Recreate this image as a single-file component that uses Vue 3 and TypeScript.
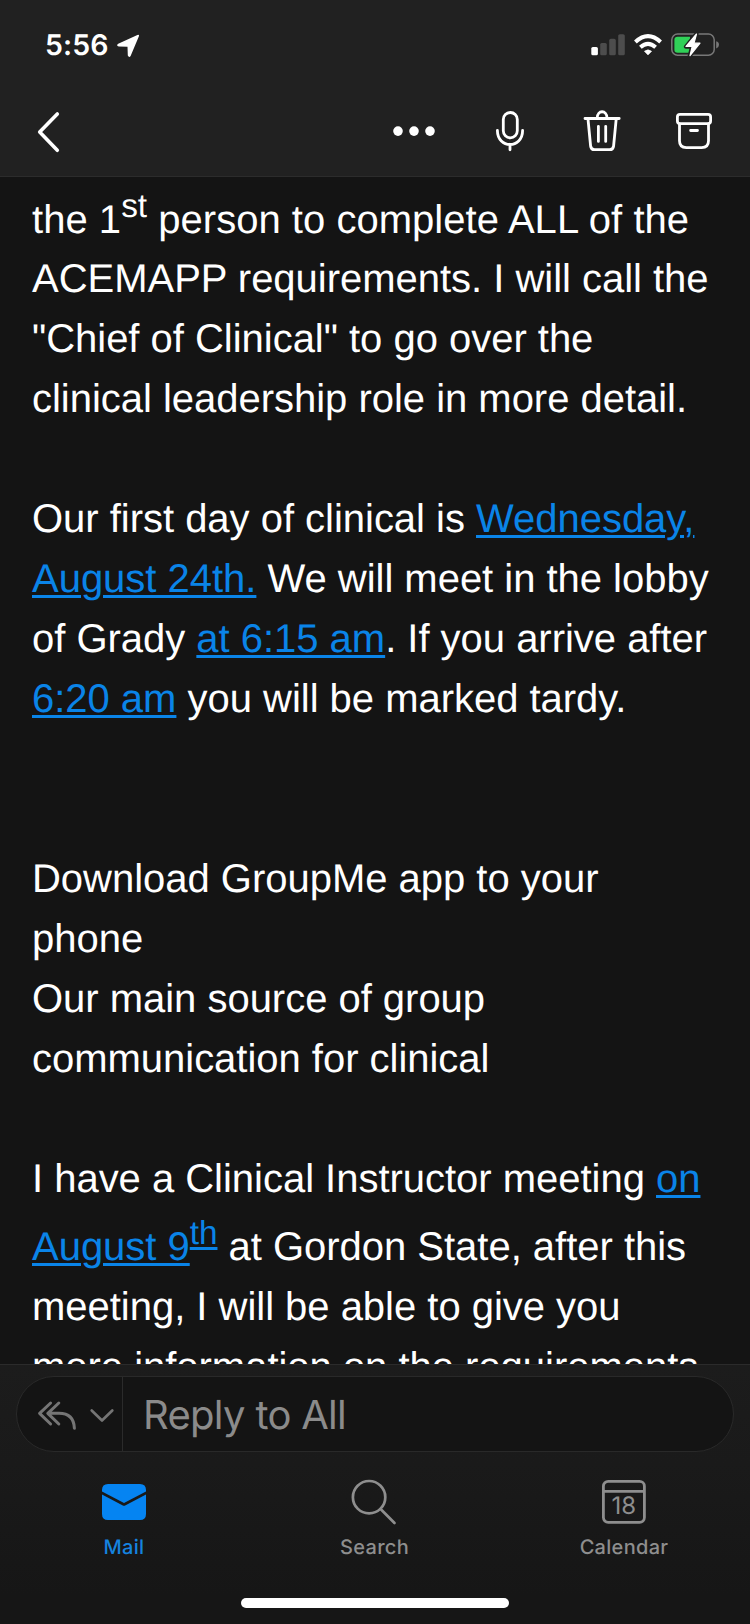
<script setup lang="ts">
interface Tab {
  id: string
  label: string
  active: boolean
}

const tabs: Tab[] = [
  { id: 'mail', label: 'Mail', active: true },
  { id: 'search', label: 'Search', active: false },
  { id: 'calendar', label: 'Calendar', active: false },
]
</script>

<template>
  <div class="screen">
    <header class="top">
      <div class="status">
        <span class="time">5:56</span>
        <svg class="location" width="24" height="24" viewBox="116 33 24 24">
          <path d="M118.2 43.8 L137.4 34.9 Q139.6 34.2 138.8 36.4 L130.6 55.9 Q129.2 58 127.8 55.6 L127.5 46.8 L118.8 46.5 Q115.8 45.7 118.2 43.8Z" fill="#fff" />
        </svg>
        <svg class="signals" width="130" height="28" viewBox="590 31 130 28">
          <rect x="591.3" y="47" width="6.6" height="8.3" rx="1.6" fill="#fff" />
          <g fill="#4d4d4d">
            <rect x="600.2" y="43" width="6.6" height="12.3" rx="1.6" />
            <rect x="609.2" y="38.8" width="6.6" height="16.5" rx="1.6" />
            <rect x="618.2" y="34.2" width="6.6" height="21.1" rx="1.6" />
          </g>
          <path d="M648 54.9 L644.4 51.3 Q648 48.3 651.6 51.3Z" fill="#fff" stroke="#fff" stroke-width=".6" />
          <path d="M640.4 47.2 Q648 40.5 655.6 47.2" fill="none" stroke="#fff" stroke-width="4" />
          <path d="M635.4 42 Q648 30.4 660.6 42" fill="none" stroke="#fff" stroke-width="4" />
          <rect x="671.8" y="34" width="42.4" height="21.2" rx="5.8" fill="none" stroke="#787878" stroke-width="1.5" />
          <path d="M716.2 41.2 Q719 42 719 44.8 Q719 47.6 716.2 48.5Z" fill="#787878" />
          <path d="M677.5 36.8 H690 V52.8 H677.5 Q674.4 52.8 674.4 49.8 V39.8 Q674.4 36.8 677.5 36.8Z" fill="#30d158" />
          <path d="M696.7 33.6 L685.8 46.7 H692 L689.6 56 L700.2 42.9 H694.2Z" fill="#fff" stroke="#212121" stroke-width="4" stroke-linejoin="round" />
          <path d="M696.5 34 L686 46.5 H692.2 L690 55.6 L700 43.2 H694Z" fill="#fff" stroke="#fff" stroke-width="1.2" stroke-linejoin="round" />
        </svg>
      </div>
      <div class="toolbar">
        <svg width="30" height="48" viewBox="34 108 30 48" class="back">
          <path d="M57.3 114 L39.7 132.1 L57.3 150.3" stroke-width="3.6" />
        </svg>
        <svg width="44" height="48" viewBox="392 108 44 48">
          <g fill="#fff" stroke="none">
            <circle cx="398" cy="131.1" r="4.8" />
            <circle cx="414" cy="131.1" r="4.8" />
            <circle cx="430" cy="131.1" r="4.8" />
          </g>
        </svg>
        <svg width="36" height="48" viewBox="492 108 36 48">
          <rect x="503.3" y="112.5" width="14" height="25.3" rx="7" />
          <path d="M497.4 130.5 C497.4 149 522.6 149 522.6 130.5 M510 144.5 V149.8" />
        </svg>
        <svg width="40" height="48" viewBox="582 108 40 48">
          <path d="M585 118.5 H619.2 M597.2 118 C597.2 109.7 607 109.7 607 118 M588 119 L590.6 146 Q591 149.7 594.6 149.7 H609.6 Q613.2 149.7 613.6 146 L616.2 119 M598.4 126.3 V141.4 M605.7 126.3 V141.4" />
        </svg>
        <svg width="40" height="48" viewBox="674 108 40 48">
          <rect x="677.4" y="114.4" width="33.2" height="9.2" rx="2.6" />
          <path d="M679.5 124 V140.8 Q679.5 147.6 686.3 147.6 H701.7 Q708.5 147.6 708.5 140.8 V124 M690.6 130.5 H697.5" />
        </svg>
      </div>
    </header>

    <main class="message">
      <div class="first">the 1<sup>st</sup> person to complete ALL of the</div>
      <p>
        ACEMAPP requirements. I will call the<br />
        "Chief of Clinical" to go over the<br />
        clinical leadership role in more detail.
      </p>
      <p>
        Our first day of clinical is <a>Wednesday,<br />August 24th.</a> We will meet in the lobby<br />
        of Grady <a>at 6:15 am</a>. If you arrive after<br />
        <a>6:20 am</a> you will be marked tardy.
      </p>
      <p class="spaced">
        Download GroupMe app to your<br />
        phone<br />
        Our main source of group<br />
        communication for clinical
      </p>
      <p>
        I have a Clinical Instructor meeting <a>on<br />August 9</a><sup><a>th</a></sup> at Gordon State, after this<br />
        meeting, I will be able to give you<br />
        more information on the requirements
      </p>
    </main>

    <footer class="bottom">
      <div class="reply">
        <div class="reply-mode">
          <svg width="84" height="40" viewBox="32 1394 84 40">
            <g fill="none" stroke="#757575" stroke-width="3" stroke-linecap="round" stroke-linejoin="round">
              <path d="M50.6 1403 L39.6 1413.3 L50.6 1424" />
              <path d="M58.8 1403 L47.8 1413.3 L58.8 1424 M48.5 1413.3 H59 C69.5 1413.3 74 1419 74.4 1428.3" />
              <path d="M91.7 1410.5 L102 1420.5 L112.3 1410.5" stroke-width="2.7" />
            </g>
          </svg>
        </div>
        <span class="reply-label">Reply to All</span>
      </div>
      <nav class="tabs">
        <div v-for="tab in tabs" :key="tab.id" class="tab" :class="[tab.id, { active: tab.active }]">
          <svg v-if="tab.id === 'mail'" width="48" height="48" viewBox="0 0 48 48">
            <path d="M8 6 H40 Q46 6 46 12 V13.6 L24 25 L2 13.6 V12 Q2 6 8 6Z M2 16.4 L23.3 27.7 Q24 28 24.7 27.7 L46 16.4 V36 Q46 42 40 42 H8 Q2 42 2 36Z" fill="#0584f2" />
          </svg>
          <svg v-else-if="tab.id === 'search'" width="48" height="48" viewBox="0 0 48 48" fill="none" stroke="#8e8e8e" stroke-width="2.7" stroke-linecap="round">
            <circle cx="18.1" cy="19.2" r="16.2" />
            <path d="M29.6 31 L43.5 45" />
          </svg>
          <svg v-else width="48" height="48" viewBox="0 0 48 48">
            <rect x="3.4" y="3.4" width="41" height="41" rx="4.8" fill="none" stroke="#8e8e8e" stroke-width="2.8" />
            <path d="M3.4 13.4 H44.4" stroke="#8e8e8e" stroke-width="2.8" />
            <text x="23.8" y="36" text-anchor="middle" class="day">18</text>
          </svg>
          <span class="tab-label">{{ tab.label }}</span>
        </div>
      </nav>
      <div class="home-indicator"></div>
    </footer>
  </div>
</template>

<style>
body {
  margin: 0;
  background: #141414;
}
</style>

<style scoped>
.screen {
  width: 750px;
  height: 1624px;
  display: flex;
  flex-direction: column;
  overflow: hidden;
  background: #141414;
  color: #fff;
  font-family: Inter, "Liberation Sans", sans-serif;
  text-rendering: geometricPrecision;
}
svg {
  display: block;
  flex: none;
}
.top {
  box-sizing: border-box;
  flex: none;
  height: 177px;
  background: #212121;
  border-bottom: 1px solid #2c2c2c;
}
.status {
  display: flex;
  align-items: center;
  box-sizing: border-box;
  height: 90px;
  padding: 0 30px 0 45px;
}
.time {
  width: 71px;
  font-size: 28.5px;
  font-weight: 600;
  letter-spacing: 0.1px;
  line-height: 36px;
  white-space: nowrap;
}
.signals {
  margin-left: auto;
}
.toolbar {
  display: flex;
  align-items: center;
  margin-top: 18px;
  padding: 0 36px 0 34px;
  gap: 52px;
}
.toolbar svg {
  fill: none;
  stroke: #fff;
  stroke-width: 2.8;
  stroke-linecap: round;
  stroke-linejoin: round;
}
.toolbar .back {
  margin-right: auto;
}
.toolbar svg:nth-child(2) {
  margin-right: 4px;
}
.toolbar svg:nth-child(3) {
  margin-right: 2px;
}
.message {
  flex: 1;
  min-height: 0;
  overflow: hidden;
  padding: 5px 20px 0 32px;
  font-family: "Liberation Sans", Arial, sans-serif;
  font-size: 40px;
  line-height: 60px;
  letter-spacing: -0.02px;
  white-space: nowrap;
}
.first {
  margin-bottom: -1px;
  letter-spacing: 0.03px;
}
.message p {
  margin: 0 0 60px;
}
.message .spaced {
  margin-top: 120px;
}
.message a {
  color: #0a84e8;
  text-decoration: underline;
  text-decoration-thickness: 2.5px;
  text-underline-offset: 3px;
}
sup {
  font-size: 33.3px;
  line-height: 50.7px;
  vertical-align: 16px;
}
.bottom {
  box-sizing: border-box;
  flex: none;
  height: 260px;
  border-top: 1px solid #2b2b2b;
  padding-top: 11px;
  background: linear-gradient(#1c1c1c 0, #1a1a1a 100px, #161616 230px);
}
.reply {
  box-sizing: border-box;
  display: flex;
  height: 76px;
  margin: 0 16px;
  border: 1px solid #292929;
  border-radius: 38px;
  background: #141414;
}
.reply-mode {
  display: flex;
  align-items: center;
  box-sizing: border-box;
  width: 106px;
  padding-left: 15px;
  border-right: 1px solid #2b2b2b;
}
.reply-label {
  margin-left: 20px;
  color: #8b8b8b;
  font-size: 40px;
  line-height: 76px;
  letter-spacing: -0.7px;
}
.tabs {
  display: grid;
  grid-template-columns: repeat(3, 250px);
  height: 118px;
  margin-top: 26px;
}
.tab {
  display: flex;
  flex-direction: column;
  align-items: center;
  color: #8e8e8e;
}
.mail {
  padding-right: 2px;
}
.search {
  padding-right: 1px;
}
.calendar {
  padding-right: 2px;
}
.tab-label {
  margin-top: 8px;
  font-size: 20px;
  font-weight: 500;
  line-height: 26px;
  letter-spacing: 0.3px;
}
.active {
  color: #1583df;
}
.day {
  fill: #8e8e8e;
  font-family: Inter, sans-serif;
  font-size: 24px;
}
.home-indicator {
  width: 268px;
  height: 10px;
  margin: 2px 0 0 241px;
  border-radius: 5px;
  background: #fff;
}
</style>
